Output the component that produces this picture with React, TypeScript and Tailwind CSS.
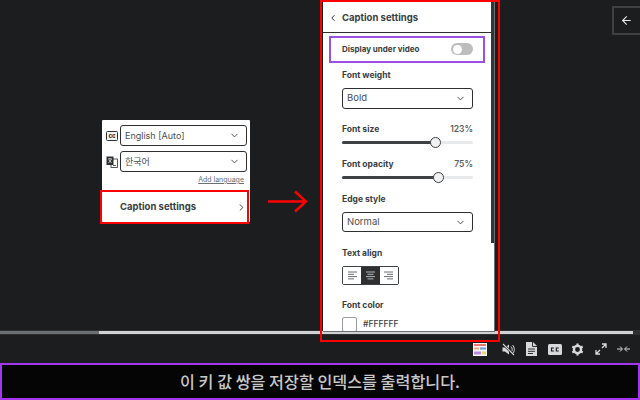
import { ChevronDown, ChevronLeft, ChevronRight, ArrowLeft } from "lucide-react";

const sans = "font-['Inter','Liberation_Sans',sans-serif]";

function Select({ label, cls }: { label: string; cls: string }) {
  return (
    <div className={`flex items-center justify-between border border-[#2d2f31] rounded-[3px] bg-white pl-[4px] pr-[6px] text-[#4a4d50] ${cls}`}>
      <span className="font-['Inter','Noto_Sans_CJK_KR',sans-serif]">{label}</span>
      <ChevronDown size={11} strokeWidth={1.8} className="text-[#2d2f31]" />
    </div>
  );
}

function Slider({ label, value, pct }: { label: string; value: string; pct: number }) {
  return (
    <div className="flex flex-col">
      <div className="flex justify-between text-[8.5px] leading-[12px] h-[12px]">
        <span className="font-bold text-[#3a3d40]">{label}</span>
        <span className="font-semibold text-[#5a5d60]">{value}</span>
      </div>
      <div className="relative h-[3px] mt-[6px] bg-[#e8e9eb] rounded-full">
        <div className="h-full bg-[#3e4143] rounded-full" style={{ width: `${pct}%` }} />
        <div className="absolute top-[-4px] w-[11px] h-[11px] -ml-[5px] rounded-full bg-[#f2f2f2] border border-[#3e4143]" style={{ left: `${pct}%` }} />
      </div>
    </div>
  );
}

function Align({ dark, offs }: { dark?: boolean; offs: number[][] }) {
  return (
    <div className={`w-[19px] h-full flex items-center justify-center ${dark ? "bg-[#2d2f31]" : "bg-white"}`}>
      <svg width="9" height="9" viewBox="0 0 9 9" stroke={dark ? "#b8b9bb" : "#6a6d70"} strokeWidth="1">
        {offs.map(([a, b], i) => <line key={i} x1={a} x2={b} y1={1 + i * 2.3} y2={1 + i * 2.3} />)}
      </svg>
    </div>
  );
}

export default function App() {
  return (
    <div className={`w-[640px] h-[400px] flex flex-col bg-[#1c1d1f] overflow-hidden ${sans}`}>
      <div className="relative h-[330px] shrink-0">
        {/* back */}
        <div className="absolute left-[612px] top-[6px] w-[30px] h-[29px] border-2 border-[#3e4143] flex items-center justify-center pr-[2px]">
          <ArrowLeft size={13} strokeWidth={2} className="text-[#e8e8e8]" />
        </div>

        {/* left menu */}
        <div className="absolute left-[102px] top-[120px] w-[148px] h-[102px] bg-white rounded-[1px] flex flex-col">
          <div className="flex items-center gap-[2px] pl-[4px] pt-[5px]">
            <svg width="12" height="10" viewBox="0 0 12 10" className="shrink-0">
              <rect x="0.5" y="0.5" width="11" height="9" rx="1" fill="#f4f4f4" stroke="#2d2f31" />
              <text x="6" y="7" fontSize="6" fontWeight="800" textAnchor="middle" fill="#2d2f31">cc</text>
            </svg>
            <Select label="English [Auto]" cls="w-[127px] h-[21px] text-[9px]" />
          </div>
          <div className="flex items-center gap-[2px] pl-[4px] pt-[5px]">
            <svg width="12" height="12" viewBox="0 0 12 12" className="shrink-0">
              <rect x="5" y="3" width="6.5" height="8.5" fill="#fff" stroke="#2d2f31" strokeWidth="0.8" />
              <rect x="0.5" y="0.5" width="7" height="8.5" fill="#2d2f31" />
              <path d="M2 3h4M4 2v1M2.5 7 5.5 3.5M3 4l2.5 3" stroke="#fff" strokeWidth="0.7" fill="none" />
              <path d="M7 9.5h3" stroke="#2d2f31" strokeWidth="0.8" />
            </svg>
            <Select label="한국어" cls="w-[127px] h-[21px] text-[9px]" />
          </div>
          <div className="text-right pr-[6px] mt-[3px] text-[7px] leading-[10px] text-[#6a6f73] underline">Add language</div>
          <div className="flex items-center justify-between mt-[8px] h-[34px] pl-[18px] pr-[3px]">
            <span className="text-[9.5px] font-bold text-[#3a3d40]">Caption settings</span>
            <ChevronRight size={11} strokeWidth={2} className="text-[#3a3d40]" />
          </div>
        </div>
        {/* left highlight */}
        <div className="absolute left-[100px] top-[190px] w-[149px] h-[34px] border-[2px] border-[#ff0000]" />

        {/* arrow */}
        <svg className="absolute left-[267px] top-[190px]" width="42" height="24" viewBox="0 0 42 24" fill="none" stroke="#ff0000" strokeWidth="2.4">
          <path d="M1 11.5h38M28 1.5l11 10-11 10" />
        </svg>

        {/* right panel */}
        <div className="absolute left-[323px] top-[2px] w-[172px] h-[330px] bg-white border-b border-r border-[#6a6f73] flex flex-col overflow-hidden">
          <div className="h-[31px] shrink-0 flex items-center gap-[4px] pl-[5px] pt-[2px] border-b border-[#2d2f31]">
            <ChevronLeft size={10} strokeWidth={2.4} className="text-[#2d2f31]" />
            <span className="text-[9.5px] font-bold text-[#3a3d40]">Caption settings</span>
          </div>
          <div className="flex flex-col pl-[19px] pr-[21px] pt-[9px]">
            <div className="flex items-center justify-between h-[12px] mt-[1px]">
              <span className="text-[8px] font-bold text-[#3a3d40]">Display under video</span>
              <div className="w-[22px] h-[12px] rounded-full bg-[#bdbdbd] p-[1.5px]">
                <div className="w-[9px] h-[9px] rounded-full bg-white" />
              </div>
            </div>
            <div className="text-[8.5px] leading-[12px] font-bold text-[#3a3d40] mt-[14px]">Font weight</div>
            <Select label="Bold" cls="h-[21px] mt-[7px] text-[9.5px]" />
            <div className="mt-[14px]"><Slider label="Font size" value="123%" pct={71} /></div>
            <div className="mt-[14px]"><Slider label="Font opacity" value="75%" pct={73} /></div>
            <div className="text-[8.5px] leading-[12px] font-bold text-[#3a3d40] mt-[14px]">Edge style</div>
            <Select label="Normal" cls="h-[20px] mt-[7px] text-[9.5px]" />
            <div className="text-[8.5px] leading-[12px] font-bold text-[#3a3d40] mt-[15px]">Text align</div>
            <div className="flex w-[57px] h-[19px] mt-[7px] border border-[#3e4143] rounded-[2px] overflow-hidden">
              <Align offs={[[0, 9], [0, 6], [0, 9], [0, 6]]} />
              <Align dark offs={[[0, 9], [1.5, 7.5], [0, 9], [1.5, 7.5]]} />
              <Align offs={[[0, 9], [3, 9], [0, 9], [3, 9]]} />
            </div>
            <div className="text-[8.5px] leading-[12px] font-bold text-[#3a3d40] mt-[14px]">Font color</div>
            <div className="flex items-center gap-[6px] mt-[6px]">
              <div className="w-[15px] h-[15px] rounded-[2px] bg-white border border-[#9a9c9e]" />
              <span className="text-[8.5px] text-[#3a3d40] font-medium">#FFFFFF</span>
            </div>
          </div>
          <div className="absolute right-0 top-0 w-[3px] h-[241px] bg-[#333537]" />
        </div>
        {/* right highlights */}
        <div className="absolute left-[329px] top-[36px] w-[156px] h-[27px] border-2 border-[#9b51e0]" />
        <div className="absolute left-[320px] top-0 w-[180px] h-[342px] border-[2px] border-[#ff0000]" />
      </div>

      {/* scrubber */}
      <div className="h-[5px] shrink-0 bg-[#2d2f31] py-[1px] pr-[7px] flex">
        <div className="w-[99px] bg-[#6a6f73]" />
        <div className="flex-1 bg-[#d0d1d0]" />
      </div>

      {/* controls */}
      <div className="h-[28px] shrink-0 flex items-center justify-end text-[#d8d9dc]">
        <svg width="14" height="13" viewBox="0 0 14 13" className="mr-[10px]">
          <rect width="14" height="13" fill="#f7f9fa" />
          <rect x="1" y="1" width="12" height="2" fill="#f0766e" />
          <rect x="1" y="4.5" width="5" height="2" fill="#f5a971" />
          <rect x="7" y="4.5" width="6" height="2" fill="#6d9cec" />
          <rect x="1" y="8.5" width="7" height="3" fill="#b98ae0" />
          <rect x="9" y="8.5" width="4" height="3" fill="#f1d46c" />
        </svg>
        <div className="w-[23px] flex justify-center">
          <svg width="13" height="13" viewBox="0 0 13 13">
            <path d="M0.5 4.5h2.5L7 1.5v10L3 8.5H0.5z" fill="#d8d9dc" />
            <path d="M9 3.5c1.6 1.6 1.6 4.4 0 6M10.5 2c2.4 2.4 2.4 6.6 0 9" fill="none" stroke="#d8d9dc" strokeWidth="1" />
            <path d="M1 1l11 11" stroke="#1c1d1f" strokeWidth="2.4" />
            <path d="M1 1l11 11" stroke="#d8d9dc" strokeWidth="1.1" />
          </svg>
        </div>
        <div className="w-[23px] flex justify-center">
          <svg width="11" height="14" viewBox="0 0 11 14">
            <path d="M0 0h7l4 4v10H0z" fill="#d8d9dc" />
            <path d="M6.5 0v4.5H11" fill="none" stroke="#1c1d1f" strokeWidth="0.9" />
            <path d="M2 7h7M2 9.3h7M2 11.5h5" stroke="#1c1d1f" strokeWidth="0.9" />
          </svg>
        </div>
        <div className="w-[23px] flex justify-center">
          <svg width="14" height="11" viewBox="0 0 14 11">
            <rect width="14" height="11" rx="1.5" fill="#d8d9dc" />
            <path d="M6 4H3.5v3H6M10.8 4H8.3v3h2.5" fill="none" stroke="#1c1d1f" strokeWidth="1.2" />
          </svg>
        </div>
        <div className="w-[23px] flex justify-center">
          <svg width="13" height="13" viewBox="0 0 13 13">
            <circle cx="6.5" cy="6.5" r="3.6" fill="none" stroke="#d8d9dc" strokeWidth="2.4" />
            <path d="M6.5 0.5v12M1.3 3.5l10.4 6M1.3 9.5l10.4-6" stroke="#d8d9dc" strokeWidth="2.2" strokeDasharray="2.2 7.6" />
          </svg>
        </div>
        <div className="w-[23px] flex justify-center">
          <svg width="12" height="12" viewBox="0 0 12 12" fill="none" stroke="#d8d9dc" strokeWidth="1.3">
            <path d="M7 1h4v4M11 1 7 5M1 7v4h4M1 11l4-4" />
          </svg>
        </div>
        <div className="w-[23px] flex justify-center">
          <svg width="13" height="8" viewBox="0 0 13 8" fill="none" stroke="#d8d9dc" strokeWidth="1">
            <path d="M0 4h5M3 1.5 5.5 4 3 6.5M13 4H8M10 1.5 7.5 4 10 6.5" />
          </svg>
        </div>
        <div className="w-[5px]" />
      </div>

      {/* caption bar */}
      <div className="flex-1 border-2 border-[#a435f0] bg-[#050505] flex items-center justify-center">
        <span className="font-['Noto_Sans_CJK_KR','Inter',sans-serif] text-[16.2px] font-medium text-[#c8c8c8]">이 키 값 쌍을 저장할 인덱스를 출력합니다.</span>
      </div>
    </div>
  );
}
